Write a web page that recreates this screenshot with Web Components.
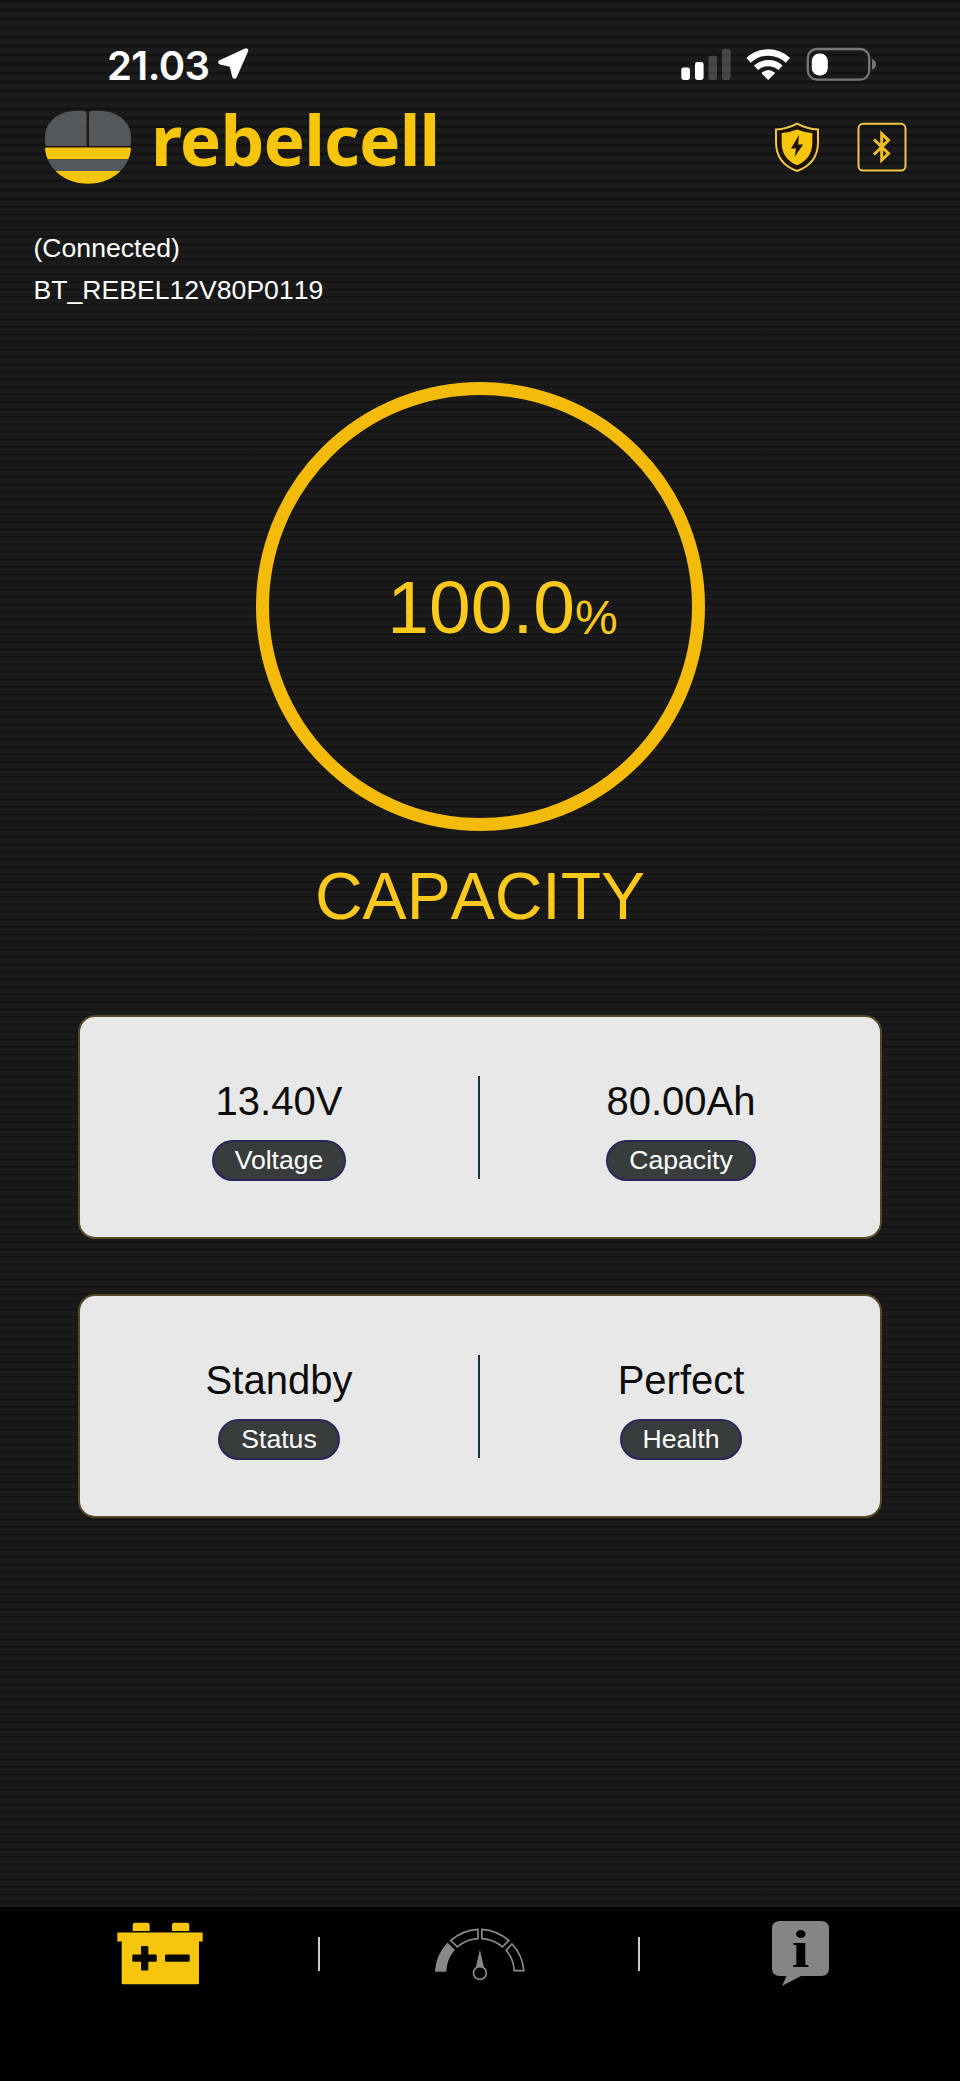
<!DOCTYPE html>
<html lang="en">
<head>
<meta charset="utf-8">
<title>rebelcell</title>
<style>
    body{margin:0;background:#000;}
</style>
</head>
<body>
<battery-app>
    <status-bar slot="top" time="21.03"></status-bar>
    <brand-header slot="top">rebelcell</brand-header>
    <device-info state="(Connected)">BT_REBEL12V80P0119</device-info>
    <charge-ring value="100.0" unit="%">CAPACITY</charge-ring>
    <info-card>
        <info-item label="Voltage">13.40V</info-item>
        <info-item label="Capacity">80.00Ah</info-item>
    </info-card>
    <info-card>
        <info-item label="Status">Standby</info-item>
        <info-item label="Health">Perfect</info-item>
    </info-card>
    <tab-bar slot="bottom"></tab-bar>
</battery-app>

<script>
(()=>{

    // attach an open shadow root filled from a template string
    const define = (name, html, init) => {
        const template = document.createElement('template');
        template.innerHTML = html;

        class Element extends HTMLElement {
            constructor(){
                super();
                this.attachShadow({mode:'open'});
                this.shadowRoot.appendChild(template.content.cloneNode(true));
            }

            connectedCallback(){
                if(init) init(this, this.shadowRoot);
            }
        }

        window.customElements.define(name, Element);
    };

    // page frame: striped top, striped content, tab bar
    define('battery-app', `
    <header><slot name="top"></slot></header>
    <main><slot></slot></main>
    <slot name="bottom"></slot>

    <style>
        :host{display:flex;flex-direction:column;width:960px;height:2081px;color:#fff;font-family:"Liberation Sans",Arial,sans-serif;}
        header{height:201px;background:repeating-linear-gradient(#121212 0 2px,#171717 2px 3px,#1b1b1b 3px 8px,#181818 8px 9px);}
        main{flex:1;background:repeating-linear-gradient(#1a1a1a 0 4.500px,#131313 5.500px 6px,#1a1a1a 7.500px);}
    </style>`);

    define('status-bar', `
    <time></time>
    <svg class="arrow" width="32" height="32" viewBox="218 50 32 32">
        <path d="M246 52.500 220.500 64.300 231.500 66.800 234.500 78.500Z" fill="#fff" stroke="#fff" stroke-width="4.500" stroke-linejoin="round"/>
    </svg>
    <svg class="icons" width="198" height="36" viewBox="680 46 198 36">
        <g fill="#fff">
            <rect x="681.300" y="67.600" width="8.700" height="12.400" rx="2.400"/>
            <rect x="695" y="62" width="8.600" height="18" rx="2.400"/>
            <rect x="708.400" y="55.700" width="8.600" height="24.300" rx="2.400" opacity=".2"/>
            <rect x="722" y="49" width="8.600" height="31" rx="2.400" opacity=".2"/>
            <path d="M768.200 80 761.800 73.600Q761.400 73 762 72.500Q768.200 67.500 774.600 72.500Q775.200 73 774.700 73.600Z"/>
        </g>
        <g fill="none" stroke="#fff">
            <path d="M748.600 60.300A28.800 28.800 0 0 1 787.900 60.300" stroke-width="6.400"/>
            <path d="M756 67.800A18.500 18.500 0 0 1 780.500 67.800" stroke-width="6.200"/>
        </g>
        <rect x="807.800" y="49" width="61.400" height="30.600" rx="9" fill="none" stroke="#777" stroke-width="2.300"/>
        <path d="M872 59Q876 60.500 876 64.400Q876 68.300 872 69.800Z" fill="#777"/>
        <rect x="811.800" y="53.600" width="16" height="21.800" rx="7.300" fill="#fff"/>
    </svg>

    <style>
        :host{display:flex;align-items:center;height:97px;padding:31px 82px 0 107px;box-sizing:border-box;}
        time{font:600 40px/66px Inter,sans-serif;letter-spacing:-.6px;width:111px;padding-top:3px;}
        .icons{margin-left:auto;}
        svg{display:block;}
    </style>`, (el, root) => {
        root.querySelector('time').textContent = el.getAttribute('time');
    });

    define('brand-header', `
    <svg width="91" height="85" viewBox="40 105 91 85">
        <clipPath id="bowl"><path d="M45 149Q45 147.500 46.500 147.500H129.500Q131 147.500 131 149C129 168 112 183.800 88 183.800C64 183.800 47 168 45 149Z"/></clipPath>
        <g fill="#55585a">
            <path d="M45 143V137C45 121 60 110.800 77 110.800H83Q86.600 110.800 86.600 114.300V146H47.500Q45 146 45 143Z"/>
            <path d="M131 143V137C131 121 116 110.800 99 110.800H92.600Q89 110.800 89 114.300V146H128.500Q131 146 131 143Z"/>
        </g>
        <g clip-path="url(#bowl)">
            <rect x="45" y="147" width="86" height="12.300" fill="#f7c50b"/>
            <rect x="45" y="159.300" width="86" height="11.700" fill="#55585a"/>
            <rect x="45" y="171" width="86" height="13" fill="#f7c50b"/>
        </g>
    </svg>
    <span><slot></slot></span>
    <svg class="shield" width="46" height="52" viewBox="774 121 46 52">
        <path d="M797 123.600Q807 129 818 129.500V142C818 158 809.500 166.500 797 171C784.500 166.500 776 158 776 142V129.500Q787 129 797 123.600Z" fill="#1b1305" stroke="#efc54a" stroke-width="2"/>
        <path d="M797 129.500Q804 132.500 812.300 133V143C812.300 154.500 806 161.500 797 165.300C788 161.500 781.700 154.500 781.700 143V133Q790 132.500 797 129.500Z" fill="#f7c50b"/>
        <path d="M799 135 791 148.600H796L794.600 157 803 144.500H798.200Z" fill="#1b1305"/>
    </svg>
    <svg width="50" height="50" viewBox="857 122 50 50">
        <rect x="858.500" y="123.800" width="47" height="46.800" rx="4.500" fill="none" stroke="#efc54a" stroke-width="2"/>
        <path d="M874 139.500 888.500 153.500 881.700 160V133.800L888.500 140.300 874 154.500" fill="none" stroke="#f2bd25" stroke-width="3"/>
    </svg>

    <style>
        :host{display:flex;align-items:center;height:100px;padding:0 53px 0 40px;}
        span{margin-left:20px;padding-bottom:16px;font:700 69.500px/96px "Noto Sans",sans-serif;letter-spacing:-.85px;color:#f7c50b;}
        .shield{margin-left:auto;margin-right:37px;}
    </style>`);

    define('device-info', `
    <span></span>
    <span><slot></slot></span>

    <style>
        :host{display:flex;flex-direction:column;height:181px;padding:26px 0 0 33.500px;box-sizing:border-box;font-size:26.600px;line-height:42px;font-kerning:none;}
    </style>`, (el, root) => {
        root.querySelector('span').textContent = el.getAttribute('state');
    });

    define('charge-ring', `
    <div class="ring"><b></b><i></i></div>
    <div class="title"><slot></slot></div>

    <style>
        :host{display:flex;flex-direction:column;align-items:center;height:633px;color:#fbc81c;font-kerning:none;}
        .ring{width:449px;height:449px;box-sizing:border-box;border:13.500px solid #f5bb0b;border-radius:50%;display:flex;align-items:baseline;justify-content:center;padding:169px 0 0 45px;}
        b{font-weight:400;font-size:75px;line-height:86px;}
        i{font-style:normal;font-size:48px;line-height:56px;position:relative;top:1px;}
        .title{font-size:66px;line-height:76px;margin-top:27px;}
    </style>`, (el, root) => {
        root.querySelector('b').textContent = el.getAttribute('value');
        root.querySelector('i').textContent = el.getAttribute('unit');
    });

    define('info-card', `
    <slot></slot>

    <style>
        :host{display:grid;grid-template-columns:1fr 1fr;align-items:center;width:804px;height:224px;margin:0 auto 55px;box-sizing:border-box;border:2px solid #554727;border-radius:17px;background:#e8e8e8;}
        ::slotted(info-item){padding-left:2px;}
        ::slotted(:first-child){padding-left:0;border-right:2px solid #17304a;}
    </style>`);

    define('info-item', `
    <span class="value"><slot></slot></span>
    <span class="label"></span>

    <style>
        :host{display:flex;flex-direction:column;align-items:center;justify-content:flex-end;height:103px;box-sizing:border-box;}
        .value{font-size:40px;line-height:46px;color:#0c0c0c;font-kerning:none;margin-bottom:16px;}
        .label{box-sizing:border-box;height:41px;margin-bottom:-2px;border:2px solid #28275c;border-radius:21px;background:#393c3d;padding:0 21px;font-size:26.600px;line-height:36px;color:#fff;}
    </style>`, (el, root) => {
        root.querySelector('.label').textContent = el.getAttribute('label');
    });

    define('tab-bar', `
    <div class="tab">
        <svg width="88" height="64" viewBox="116 1922 88 64">
            <g fill="#f7c50b">
                <path d="M132.700 1931V1925Q132.700 1922.700 135 1922.700H147.300Q149.700 1922.700 149.700 1925V1931ZM172 1931V1925Q172 1922.700 174.300 1922.700H187Q189.300 1922.700 189.300 1925V1931Z"/>
                <path d="M117.300 1932.500H202.700V1941.500H199V1983Q199 1984.300 197.700 1984.300H123Q121.700 1984.300 121.700 1983V1941.500H117.300Z"/>
            </g>
            <g fill="#080600">
                <rect x="132.300" y="1954.500" width="24.500" height="7.300" rx="1.300"/>
                <rect x="141" y="1946" width="7.300" height="24.500" rx="1.300"/>
                <rect x="165" y="1954.500" width="24.700" height="7.300" rx="1.300"/>
            </g>
        </svg>
    </div>
    <div class="tab">
        <svg width="92" height="54" viewBox="434 1926 92 54">
            <g fill="none" stroke="#888" stroke-width="1.700">
                <path d="M435.800 1970A44.500 44.500 0 0 1 447.500 1942.800L453.800 1949A34 34 0 0 0 445.500 1970Z" fill="#888"/>
                <path d="M450.800 1939.500A44.500 44.500 0 0 1 477.900 1928.300V1937.600A35 35 0 0 0 457.300 1945.900Z"/>
                <path d="M481.900 1928.300A44.500 44.500 0 0 1 508.800 1939.500L502.500 1945.900A35 35 0 0 0 481.900 1937.600Z"/>
                <path d="M512 1943A44.500 44.500 0 0 1 523.900 1969.700H514.200A34 34 0 0 0 506.200 1949.300Z"/>
                <circle cx="479.900" cy="1972" r="6.400"/>
            </g>
            <path d="M479.900 1948.500 484 1966.500Q479.900 1963.800 475.800 1966.500Z" fill="#888"/>
        </svg>
    </div>
    <div class="tab">
        <svg width="60" height="68" viewBox="770 1920 60 68">
            <path d="M780 1921H821Q829 1921 829 1929V1968Q829 1976 821 1976H801L782 1986 786.500 1976H780Q772 1976 772 1968V1929Q772 1921 780 1921Z" fill="#858585"/>
            <text x="0" y="0" transform="translate(800.500 1966.500) scale(1.200 1)" text-anchor="middle" font-family="Liberation Serif, serif" font-weight="700" font-size="53" fill="#000">i</text>
        </svg>
    </div>

    <style>
        :host{display:grid;grid-template-columns:repeat(3,1fr);height:174px;padding-top:10px;box-sizing:border-box;background:#000;}
        .tab{height:74px;display:flex;align-items:center;justify-content:center;background:linear-gradient(#ccc,#ccc) right 20px/2px 34px no-repeat;}
        .tab:last-of-type{background:none;}
    </style>`);

})();
</script>
</body>
</html>
